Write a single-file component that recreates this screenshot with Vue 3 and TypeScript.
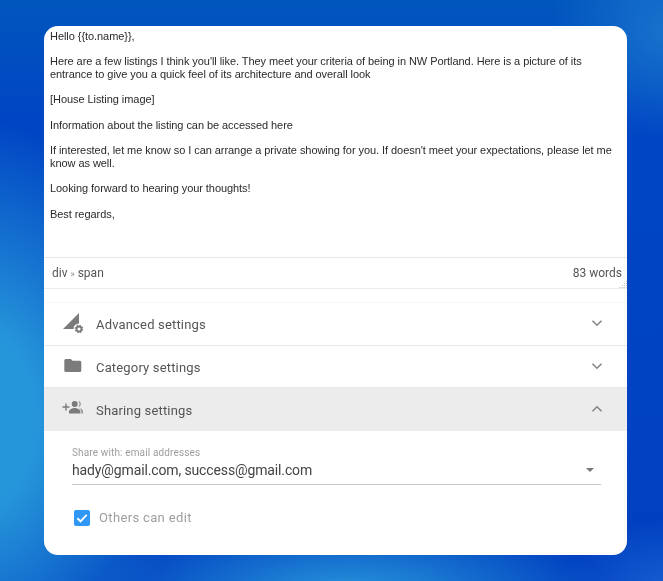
<script setup lang="ts">
interface Section {
  title: string
  icon: string
  open?: boolean
}
const sections: Section[] = [
  { title: 'Advanced settings', icon: 'adv' },
  { title: 'Category settings', icon: 'folder' },
  { title: 'Sharing settings', icon: 'share', open: true },
]
</script>

<template>
  <div class="page">
    <div class="card">
      <div class="editor">
        <p>Hello {{ '{' + '{to.name}' + '}' }},</p>
        <p>Here are a few listings I think you'll like. They meet your criteria of being in NW Portland. Here is a picture of its entrance to give you a quick feel of its architecture and overall look</p>
        <p>[House Listing image]</p>
        <p>Information about the listing can be accessed here</p>
        <p>If interested, let me know so I can arrange a private showing for you. If doesn't meet your expectations, please let me know as well.</p>
        <p>Looking forward to hearing your thoughts!</p>
        <p>Best regards,</p>
      </div>
      <div class="status">
        <span>div <small>»</small> span</span>
        <span>83 words</span>
        <svg class="grip" width="8" height="8" viewBox="0 0 8 8">
          <path d="M0.500 7.500H8M3 5.500H8M5 3.500H8M7 1.500H8" fill="none" stroke="#bdbdbd" stroke-width="1" stroke-dasharray="1 1" />
        </svg>
      </div>
      <div class="gap"></div>
      <div v-for="s in sections" :key="s.title" class="row" :class="{ open: s.open }">
        <span class="ico">
          <svg v-if="s.icon === 'adv'" width="22" height="22" viewBox="0 0 22 22">
            <path d="M2 18 L18 2 V12.500 A5.500 5.500 0 0 0 12.500 18 Z" fill="#7b7b7b" />
            <circle cx="18" cy="18" r="2.500" fill="none" stroke="#7b7b7b" stroke-width="1.800" />
            <circle cx="18" cy="18" r="3.700" fill="none" stroke="#7b7b7b" stroke-width="1.200" stroke-dasharray="1.500 1.400" />
          </svg>
          <svg v-else-if="s.icon === 'folder'" width="22" height="22" viewBox="0 0 22 22">
            <path d="M4.800 5h5l1.800 1.800h7.200a1.500 1.500 0 0 1 1.500 1.500v8.200a1.500 1.500 0 0 1-1.500 1.500h-14a1.500 1.500 0 0 1-1.500-1.500V6.500A1.500 1.500 0 0 1 4.800 5z" fill="#7b7b7b" />
          </svg>
          <svg v-else width="22" height="22" viewBox="0 0 22 22">
            <path d="M1.500 9.300h2.800V6.500h1.400v2.800h2.800v1.400H5.700v2.800H4.300v-2.800H1.500z" fill="#7b7b7b" />
            <circle cx="13.700" cy="7" r="3" fill="#7b7b7b" />
            <path d="M17.500 4.100a3 3 0 0 1 0 5.800 4.600 4.600 0 0 0 0-5.800z" fill="#7b7b7b" />
            <path d="M8 16.500v-2c0-2.200 3.600-3.600 5.700-3.600s5.700 1.400 5.700 3.600v2z" fill="#7b7b7b" />
            <path d="M17.600 11.100c2 .4 4.200 1.400 4.200 3.300v2.100h-1.300v-2c0-1.400-1.100-2.500-2.900-3.400z" fill="#7b7b7b" />
          </svg>
        </span>
        <span class="title">{{ s.title }}</span>
        <svg class="chev" width="14" height="10" viewBox="0 0 14 10">
          <path :d="s.open ? 'M2.500 7.300 7 2.800l4.500 4.500' : 'M2.500 2.700 7 7.200l4.500-4.500'" fill="none" stroke="#858585" stroke-width="1.600" />
        </svg>
      </div>
      <div class="panel">
        <label class="lbl">Share with: email addresses</label>
        <div class="select">
          <span>hady@gmail.com, success@gmail.com</span>
          <i class="caret"></i>
        </div>
        <div class="check">
          <span class="box">
            <svg width="16" height="16" viewBox="0 0 16 16">
              <path d="M3.300 8.200 6.500 11.300 12.700 4.900" fill="none" stroke="#fff" stroke-width="1.900" />
            </svg>
          </span>
          <span class="check-text">Others can edit</span>
        </div>
      </div>
    </div>
  </div>
</template>

<style>
html, body { margin: 0; padding: 0; }
</style>

<style scoped>
.page {
  width: 663px;
  height: 581px;
  box-sizing: border-box;
  padding: 26px 36px 26px 44px;
  overflow: hidden;
  background:
    radial-gradient(ellipse 260px 90px at 350px 600px, rgba(42, 155, 220, 1) 0%, rgba(42, 155, 220, 0) 100%),
    radial-gradient(ellipse 220px 300px at -30px 420px, rgba(38, 150, 218, 1) 30%, rgba(38, 150, 218, 0) 100%),
    radial-gradient(ellipse 120px 110px at 670px 30px, rgba(25, 115, 205, 1) 0%, rgba(25, 115, 205, 0) 100%),
    radial-gradient(ellipse 110px 70px at 670px 590px, rgba(25, 95, 210, 1) 0%, rgba(25, 95, 210, 0) 100%),
    linear-gradient(180deg, #0156bd 0%, #0046c4 20%, #0040c0 100%);
  font-family: Roboto, sans-serif;
}
.card {
  width: 583px;
  height: 529px;
  background: #fff;
  border-radius: 14px;
  overflow: hidden;
  display: flex;
  flex-direction: column;
  filter: blur(0.3px);
}
.editor {
  height: 231px;
  box-sizing: border-box;
  padding: 4px 6px 0;
  font-family: "Liberation Sans", Arial, sans-serif;
  font-size: 11px;
  letter-spacing: -0.060px;
  line-height: 12.700px;
  color: #2a2a2a;
}
.editor p {
  margin: 0 0 12.700px;
}
.status {
  height: 32px;
  box-sizing: border-box;
  border-top: 1px solid #e6e6e6;
  border-bottom: 1px solid #ececec;
  padding: 0 5px 0 8px;
  display: flex;
  justify-content: space-between;
  align-items: center;
  font-size: 12px;
  color: #555;
  position: relative;
}
.status small {
  font-size: 9px;
  color: #888;
}
.grip {
  position: absolute;
  right: 0;
  bottom: 0;
}
.gap {
  height: 13px;
  border-bottom: 1px solid #f7f7f7;
}
.row {
  height: 42.500px;
  flex: none;
  box-sizing: border-box;
  display: flex;
  align-items: center;
  padding: 2px 23px 0 17px;
  border-bottom: 1px solid #e9e9e9;
  color: #555;
  font-size: 13px;
  letter-spacing: 0.170px;
}
.row.open {
  background: #ececec;
  border-bottom: 0;
}
.ico {
  width: 35px;
  height: 22px;
  flex: none;
  margin-top: -5px;
}
.title {
  flex: 1;
}
.chev {
  margin-top: -3px;
}
.panel {
  padding: 16px 26px 0 28px;
}
.lbl {
  display: block;
  font-size: 10px;
  letter-spacing: 0.140px;
  line-height: 12px;
  color: #9e9e9e;
}
.select {
  display: flex;
  justify-content: space-between;
  align-items: center;
  height: 26px;
  box-sizing: border-box;
  border-bottom: 1px solid #c8c8c8;
  font-size: 14px;
  letter-spacing: -0.130px;
  color: #444;
  padding-bottom: 2px;
}
.caret {
  width: 0;
  height: 0;
  border-left: 4px solid transparent;
  border-right: 4px solid transparent;
  border-top: 4px solid #777;
  margin-right: 7px;
}
.check {
  display: flex;
  align-items: center;
  margin-top: 25px;
}
.box {
  width: 16px;
  height: 16px;
  border-radius: 2px;
  background: #2f97f5;
  margin: 0 9px 0 2px;
  display: flex;
}
.check-text {
  font-size: 13px;
  letter-spacing: 0.350px;
  color: #9e9e9e;
}
</style>
